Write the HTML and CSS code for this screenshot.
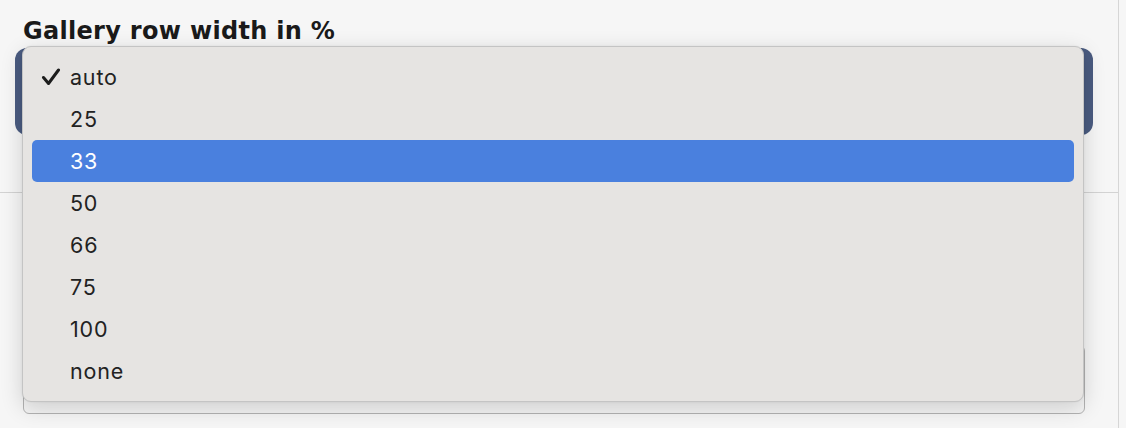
FILE: index.html
```html
<!DOCTYPE html>
<html lang="en">
<head>
<meta charset="utf-8">
<title>Gallery row width</title>
<link rel="stylesheet" href="styles.css">
</head>
<body>
<div class="panel">
  <section class="field">
    <label class="field-label">Gallery row width in %</label>
    <div class="select-box"></div>
  </section>
  <div class="divider"></div>
  <section class="field-lower">
    <div class="text-box"></div>
  </section>

  <div class="menu" role="listbox">
    <div class="menu-item checked">
      <svg class="check" width="20" height="18" viewBox="0 0 20 18"><path d="M2.5 9.5 L7.5 15.5 L17.5 2" fill="none" stroke="#1c1c1c" stroke-width="3" stroke-linecap="round" stroke-linejoin="round"/></svg>
      <span>auto</span>
    </div>
    <div class="menu-item"><span>25</span></div>
    <div class="menu-item active"><span>33</span></div>
    <div class="menu-item"><span>50</span></div>
    <div class="menu-item"><span>66</span></div>
    <div class="menu-item"><span>75</span></div>
    <div class="menu-item"><span>100</span></div>
    <div class="menu-item"><span>none</span></div>
  </div>
</div>
</body>
</html>
```
FILE: styles.css
```css
html, body {
  margin: 0;
  padding: 0;
  background: #f6f6f6;
}

.panel {
  position: relative;
  width: 1118px;
  height: 428px;
  border-right: 1px solid #d6d6d6;
  box-sizing: content-box;
  overflow: hidden;
}

.field {
  display: flex;
  flex-direction: column;
  padding-top: 17px;
}

.field-label {
  margin-left: 23px;
  font-family: "DejaVu Sans", Verdana, sans-serif;
  font-weight: bold;
  font-size: 24px;
  line-height: 28px;
  color: #1a1a1a;
  letter-spacing: 0.3px;
}

.select-box {
  margin: 3px 0 0 15px;
  width: 1078px;
  height: 87px;
  border-radius: 12px;
  background: #4a5b80;
}

.divider {
  margin-top: 57px;
  height: 1px;
  background: #d3d3d3;
}

.field-lower {
  padding: 152px 0 0 23px;
}

.text-box {
  width: 1060px;
  height: 67px;
  border: 1px solid #b3b3b3;
  border-radius: 6px;
  background: #f4f4f4;
}

.menu {
  position: absolute;
  left: 22px;
  top: 46px;
  width: 1062px;
  height: 356px;
  box-sizing: border-box;
  padding: 9px 9px;
  background: #e6e4e2;
  border: 1px solid #c4c4c4;
  border-radius: 9px;
  box-shadow: 0 6px 22px rgba(0, 0, 0, 0.16), 0 0 2px rgba(0, 0, 0, 0.08);
  display: flex;
  flex-direction: column;
}

.menu-item {
  position: relative;
  height: 42px;
  display: flex;
  align-items: center;
  padding-left: 38px;
  border-radius: 5px;
  font-family: "Inter", "Noto Sans", sans-serif;
  font-size: 21.5px;
  letter-spacing: 0.8px;
  color: #222222;
}

.menu-item.active {
  background: #4a80de;
  color: #ffffff;
}

.check {
  position: absolute;
  left: 9px;
  top: 12px;
}
```
